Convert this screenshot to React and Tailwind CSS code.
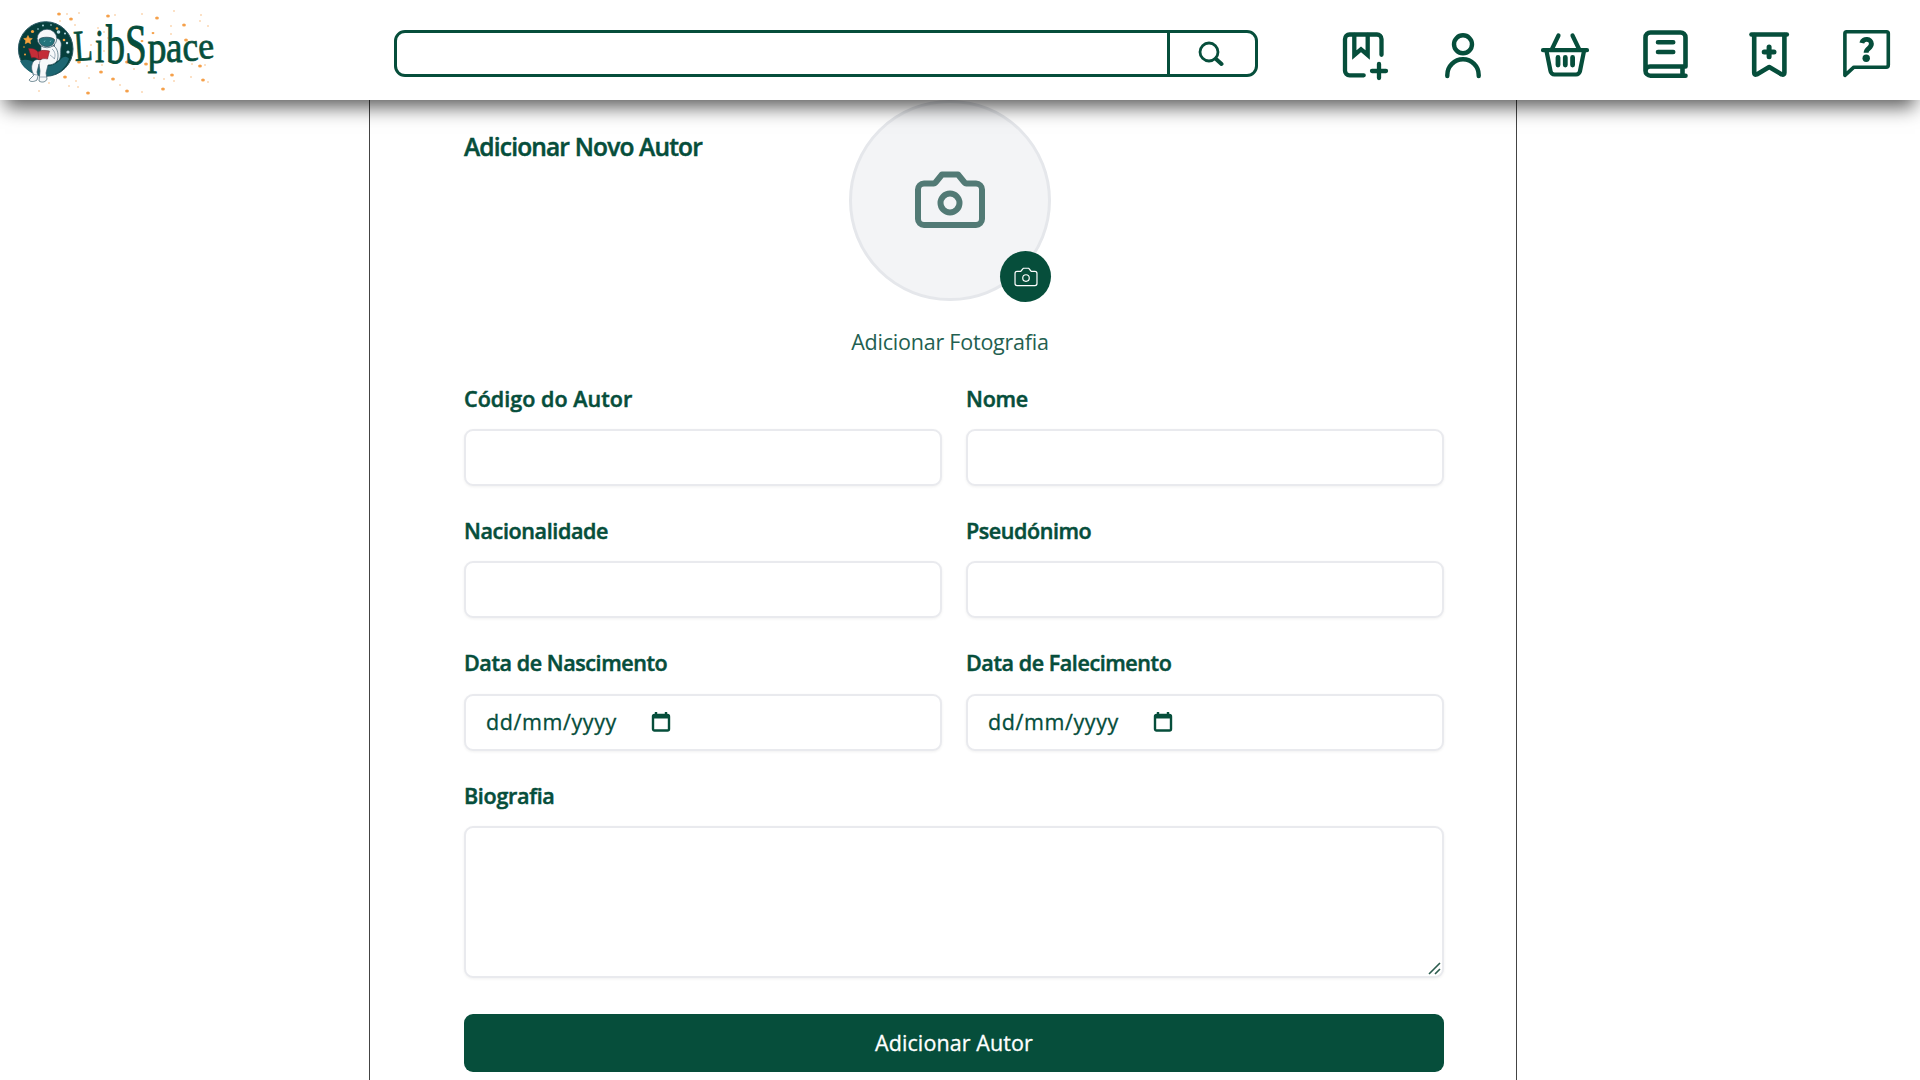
import React from "react";

const letters = [
  ["L", 75, 61, 30, 44, -4],
  ["i", 95, 62, 33, 47, 0],
  ["b", 106, 63, 38, 55, 0],
  ["S", 125, 63.5, 39, 56, 0],
  ["p", 147.5, 62.500, 38, 46, 0],
  ["a", 166, 62, 37, 44, 0],
  ["c", 183, 61, 36, 41, -3],
  ["e", 199, 59, 36, 37, -5],
];

const sparks = [
  [59, 14, 2], [67, 14, 1], [71, 19, 2], [60, 21, 1], [79, 13, 1], [75, 25, 1], [108, 16, 2], [115, 15, 1],
  [142, 14, 1], [157, 18, 2], [174, 11, 1], [184, 25, 2], [171, 26, 1], [201, 15, 1], [200, 21, 1], [208, 26, 1],
  [135, 28, 1.5], [153, 33, 1.5], [171, 34, 1], [186, 40, 2], [196, 41, 1], [208, 43, 1], [119, 40, 2], [104, 32, 1],
  [98, 28, 1], [108, 38, 1], [91, 45, 1], [142, 41, 1.5], [79, 62, 2], [87, 66, 1], [101, 72, 2], [102, 65, 1],
  [65, 77, 2], [69, 86, 1], [78, 87, 1], [88, 93, 2], [89, 78, 1], [76, 81, 1], [113, 79, 2], [120, 85, 1],
  [127, 91, 2], [142, 92, 1], [134, 69, 1], [127, 62, 2], [146, 64, 2], [163, 89, 2], [172, 75, 2], [174, 81, 1],
  [164, 79, 1], [192, 64, 1], [200, 66, 2], [205, 65, 1], [203, 80, 2], [208, 82, 1], [191, 77, 1], [39, 91, 1],
  [49, 83, 1], [176, 59, 1], [104, 51, 1], [154, 78, 1], [161, 58, 1],
];

function Logo() {
  return (
    <svg viewBox="12 8 208 88" className="h-[88px] w-[208px]" fontFamily='"Liberation Serif", serif'>
      {sparks.map(([x, y, r], i) => (
        <ellipse key={i} cx={x} cy={y} rx={r * 0.95} ry={r * 0.75} fill={r > 1 ? "#f5a04a" : "#f9c38c"} />
      ))}
      <circle cx="45.7" cy="49" r="27.3" fill="#063f3c" stroke="#2d5a66" strokeWidth="1" />
      <path d="M20 61c8-3 12 0 18 4s18 0 22-5 8-3 9-1c-3 9-12 17-23 17S24 70 20 61z" fill="#1d6672" />
      <path d="M28 35.500l1.300 2.700 3 .4-2.200 2.100.5 3-2.600-1.400-2.700 1.400.5-3-2.100-2.100 2.900-.4z" fill="#f7a23c" stroke="#f7a23c" strokeWidth=".6" />
      <g fill="#f7a23c">
        <circle cx="32.500" cy="31.500" r="1.600" /><circle cx="57" cy="28.500" r="1.300" /><circle cx="25" cy="54.500" r="1" />
        <circle cx="64" cy="40" r="1.300" /><circle cx="24" cy="47" r=".8" />
      </g>
      <g fill="#b9dfe6">
        <circle cx="58.500" cy="32" r="1.800" /><circle cx="65" cy="33.500" r="1" /><circle cx="68" cy="52" r="1.600" />
        <circle cx="43" cy="25.500" r=".9" /><circle cx="38" cy="29" r=".8" /><circle cx="67" cy="43" r="1.200" /><circle cx="51" cy="25" r=".8" />
      </g>
      <path d="M55 38c5 0 7 4 6 9s1 11-3 14h-5z" fill="#eef3f6" stroke="#355a68" strokeWidth=".7" />
      <path d="M41 46l13 0c4 3 5 10 3 15-2 3-6 4-9 4l-2 8 1 6c-1 3-5 4-8 2l1-10-1-7-2 8 1 4-1 4c-3 2-7 2-8 0l5-5c-3-5-3-9-1-13 2-3 6-3 8-2z" fill="#f6f8fa" stroke="#355a68" strokeWidth=".7" />
      <path d="M39 65l1-4M32 74l5 1M40 77h6M50 55l5 4M52 49c3 2 4 7 2 10" fill="none" stroke="#7890a0" strokeWidth=".7" />
      <ellipse cx="47" cy="38.500" rx="9.800" ry="9.300" fill="#f6f8fa" stroke="#355a68" strokeWidth=".7" />
      <path d="M39 39.500c2-3 13-3 15.500 0 0 4.500-3 7-7.500 7s-8-2.500-8-7z" fill="#24747c" stroke="#1a4250" strokeWidth=".7" />
      <path d="M44 42l1-1.500M50 42l1-1.500" stroke="#6db3b8" strokeWidth="1" />
      <path d="M28.500 48.500c4-.5 7 .5 9.500 3.500 3-2 7-2 11.500-1l-2 8c-3.500-1-6 0-8.500 1-2-2-4.500-3-7.500-2z" fill="#c42d38" stroke="#7a1f2b" strokeWidth=".6" />
      <path d="M38 52l1 8" stroke="#7a1f2b" strokeWidth=".7" />
      {letters.map(([c, x, y, sx, sy, rot], i) => (
        <text key={i} transform={`translate(${x} ${y}) rotate(${rot}) scale(${sx / 40} ${sy / 40})`} fontSize="40" fill="#064e3b" stroke="#064e3b" strokeWidth=".7">
          {c}
        </text>
      ))}
    </svg>
  );
}

const stroke = { fill: "none", stroke: "#064e3b", strokeLinecap: "round", strokeLinejoin: "round" };

function HeaderIcons() {
  return (
    <nav className="flex items-start">
      <svg viewBox="1340 28 52 54" className="h-[54px] w-[52px]" {...stroke} strokeWidth="4.300">
        <path d="M1363.700 75.300h-14.200a4.500 4.500 0 0 1-4.500-4.500V39a4.500 4.500 0 0 1 4.500-4.500h27.500a4.500 4.500 0 0 1 4.500 4.500v15.800" />
        <path d="M1354.300 35v20l6.700-5.700 6.700 5.700V35" strokeLinejoin="miter" />
        <path d="M1379 64v14M1372 71h14" />
      </svg>
      <svg viewBox="1440 28 46 54" className="ml-12 h-[54px] w-[46px]" {...stroke} strokeWidth="4.400">
        <circle cx="1463" cy="44.300" r="9" />
        <path d="M1447.300 76v-1a15.700 15.700 0 0 1 31.400 0v1" />
      </svg>
      <svg viewBox="1538 28 54 54" className="ml-[52px] h-[54px] w-[54px]" {...stroke} strokeWidth="4.200">
        <path d="M1543 50.200h44M1552 49l6.500-13.500M1579 49l-6.500-13.500" />
        <path d="M1546.500 51l4 20a4 4 0 0 0 4 3.500h21.500a4 4 0 0 0 4-3.500l4-20" />
        <path d="M1558 57.500v7.500M1565.300 57.500v7.500M1572.600 57.500v7.500" strokeWidth="4.800" />
      </svg>
      <svg viewBox="1639 28 54 54" className="ml-[47px] h-[54px] w-[54px]" {...stroke} strokeWidth="4.600">
        <path d="M1685.500 75.700h-35a5 5 0 0 1-5-5V37.500a5 5 0 0 1 5-5h30a5 5 0 0 1 5 5v29h-35.500a4.500 4.500 0 0 0-4.500 4.500M1682.500 67.500v8" />
        <path d="M1658 42.200h15.200M1658 52h15.200" />
      </svg>
      <svg viewBox="1745 28 48 54" className="ml-[52px] h-[54px] w-[48px]" {...stroke} strokeWidth="4.600">
        <path d="M1751.500 34.500h35.300" />
        <path d="M1754.200 35v37.700q0 2.500 2.500 1.700l12.500-7.400 12.500 7.400q2.700 .8 2.700-1.700V35" />
        <path d="M1769.100 47v9.800M1764.200 51.900h9.800" strokeWidth="5" />
      </svg>
      <svg viewBox="1840 26 54 54" className="-mt-0.5 ml-[47px] h-[54px] w-[54px]" {...stroke} strokeWidth="3.600">
        <path d="M1844.900 75.300V33.500q0-1.700 1.700-1.700h40q1.700 0 1.700 1.700V65q0 2.200-2.200 2.200h-32.200z" />
        <path d="M1861.800 43c1.300-5.300 9.600-4.500 9.600.8 0 4.700-5.300 4.300-5.300 9" strokeWidth="4.900" strokeLinecap="butt" />
        <circle cx="1866.200" cy="58.300" r="3.700" fill="#064e3b" stroke="none" />
      </svg>
    </nav>
  );
}

function Camera({ className, width }) {
  return (
    <svg viewBox="0 0 70 58" className={className} fill="none" stroke="currentColor" strokeWidth={width} strokeLinejoin="round">
      <path d="M3 18.500a6 6 0 0 1 6-6h9.500a3 3 0 0 0 2-1l6.500-8h16l6.500 8a3 3 0 0 0 2 1H61a6 6 0 0 1 6 6V48a6 6 0 0 1-6 6H9a6 6 0 0 1-6-6z" />
      <circle cx="35" cy="32" r="9.500" />
    </svg>
  );
}

const box = "rounded-[9px] border-2 border-[#e9eaee] bg-white shadow-[0_1px_3px_rgba(0,0,0,0.06)]";
const labelStyle = "flex h-[52px] items-center pb-[8px] text-[21.5px] font-semibold [-webkit-text-stroke:0.5px_#064e3b]";

function Field({ label, tracking, date }) {
  return (
    <div className="h-[132.3px]">
      <label className={labelStyle}><span className={tracking}>{label}</span></label>
      <div className={`flex h-[57px] items-center px-5 ${box}`}>
        {date && (
          <>
            <span className="text-[21.5px] tracking-[0.6px] [-webkit-text-stroke:0.3px_#064e3b]">dd/mm/yyyy</span>
            <svg viewBox="0 0 20 22" className="ml-[34px] h-[22px] w-5" fill="none" stroke="#064e3b" strokeWidth="2.4">
              <rect x="2" y="4" width="16" height="15.500" rx="1.500" />
              <path d="M2 5.500h16" strokeWidth="4" />
              <path d="M5 1v4M15 1v4" />
            </svg>
          </>
        )}
      </div>
    </div>
  );
}

export default function App() {
  return (
    <div className="h-[1080px] w-[1920px] overflow-hidden bg-white text-[#064e3b]" style={{ fontFamily: '"Open Sans", "Noto Sans", sans-serif' }}>
      <header className="relative z-10 flex h-[100px] bg-white shadow-[0_12px_18px_-5px_rgba(0,0,0,0.65)]">
        <div className="pl-3 pt-2"><Logo /></div>
        <div className="ml-[174px] mt-[30px] flex h-[47px] w-[864px] rounded-[11px] border-[3px] border-[#064e3b]">
          <div className="flex-1 border-r-[3px] border-[#064e3b]" />
          <div className="flex w-[85px] items-center justify-center pr-[3px] pt-px">
            <svg viewBox="0 0 26 26" className="h-[26px] w-[26px]" fill="none" stroke="#064e3b">
              <circle cx="11" cy="11" r="9" strokeWidth="2.800" />
              <path d="M18 18l5.500 5" strokeWidth="4" strokeLinecap="round" />
            </svg>
          </div>
        </div>
        <div className="ml-[82px] mt-7"><HeaderIcons /></div>
      </header>
      <main className="ml-[369px] h-[980px] w-[1148px] border-x border-[#444] pl-[94px]">
        <div className="w-[980px]">
          <div className="flex h-[277px]">
            <h1 className="w-[385px] pt-[29px] text-[24.5px] font-semibold leading-9 tracking-[-0.83px] [-webkit-text-stroke:0.5px_#064e3b]">Adicionar Novo Autor</h1>
            <div className="flex w-[202px] flex-col items-center">
              <div className="relative flex h-[201px] w-[202px] shrink-0 items-center justify-center rounded-full border-[3px] border-[#e5e7eb] bg-[#f3f4f6]">
                <Camera className="mb-0.5 h-[58px] w-[70px] text-[#527a75]" width={6} />
                <div className="absolute -bottom-1 -right-[3px] flex h-[51px] w-[51px] items-center justify-center rounded-full bg-[#064e3b] text-white">
                  <Camera className="h-5 w-6" width={3.5} />
                </div>
              </div>
              <p className="whitespace-nowrap pt-[25px] text-[21.5px] leading-8 tracking-[-0.22px] text-[#235f50]">Adicionar Fotografia</p>
            </div>
          </div>
          <div className="grid grid-cols-2 gap-x-6">
            <Field label="Código do Autor" tracking="tracking-[0.05px]" />
            <Field label="Nome" tracking="tracking-[-0.2px]" />
            <Field label="Nacionalidade" tracking="tracking-[-0.37px]" />
            <Field label="Pseudónimo" tracking="tracking-[-0.42px]" />
            <Field label="Data de Nascimento" tracking="tracking-[-0.42px]" date />
            <Field label="Data de Falecimento" tracking="tracking-[-0.42px]" date />
          </div>
          <label className={labelStyle}><span className="tracking-[-0.3px]">Biografia</span></label>
          <div className={`flex h-[152px] items-end justify-end ${box}`}>
            <svg viewBox="0 0 14 14" className="h-[14px] w-[14px]" stroke="#2c5c4e" strokeWidth="1.6">
              <path d="M1 12L12 1M7 12l5-5" />
            </svg>
          </div>
          <button className="mt-9 flex h-[58px] w-full items-center justify-center rounded-[9px] bg-[#064e3b] text-[21.5px] tracking-[0.1px] text-white [-webkit-text-stroke:0.3px_#fff]">Adicionar Autor</button>
        </div>
      </main>
    </div>
  );
}
